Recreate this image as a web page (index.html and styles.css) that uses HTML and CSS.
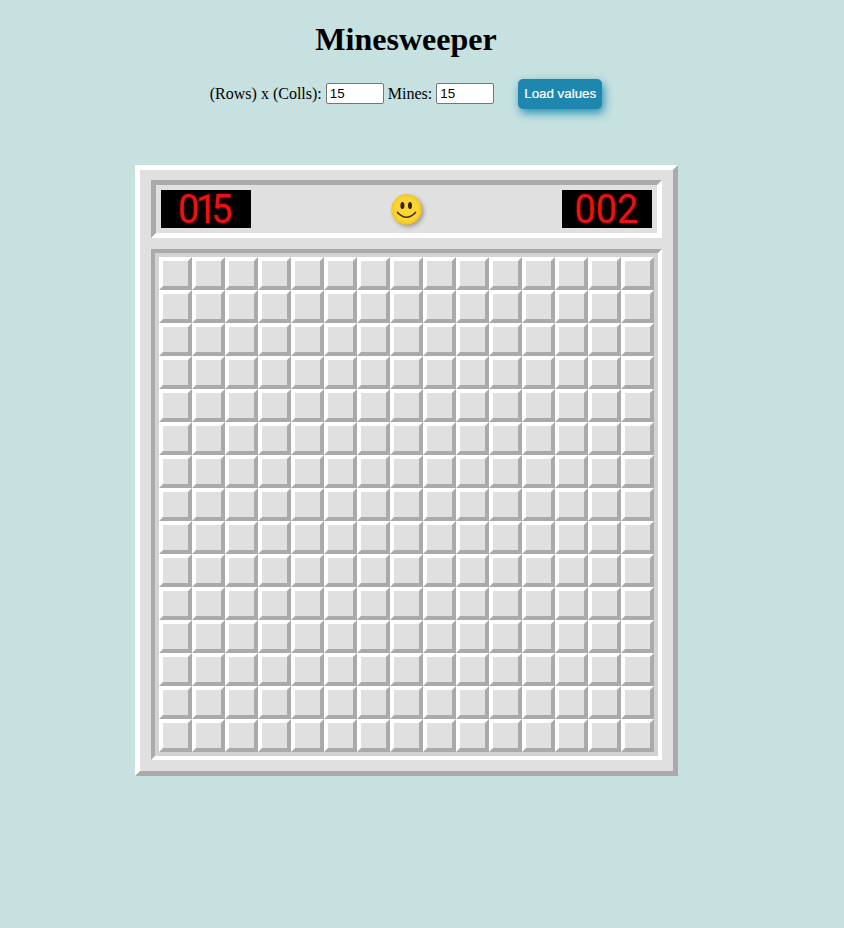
FILE: index.html
```html
<!DOCTYPE html>
<html lang="en">
<head>
<meta charset="utf-8">
<title>Minesweeper</title>
<link rel="stylesheet" href="styles.css">
</head>
<body>
<main class="page">
  <h1 class="title">Minesweeper</h1>
  <form class="settings">
    <label for="size">(Rows) x (Colls):</label>
    <input id="size" class="field" type="text" value="15">
    <label for="mines">Mines:</label>
    <input id="mines" class="field" type="text" value="15">
    <button class="load" type="button">Load values</button>
  </form>
  <section class="game">
    <header class="panel">
      <div class="counter"><span class="digits"><span>0</span><span class="one">1</span><span>5</span></span></div>
      <svg class="face" viewBox="0 0 31 31" aria-label="New game">
        <defs><radialGradient id="skin"><stop offset="0.75" stop-color="#fcd535"/><stop offset="1" stop-color="#efc522"/></radialGradient></defs>
        <circle cx="15.5" cy="15.5" r="15.2" fill="url(#skin)"/>
        <ellipse cx="11.4" cy="11.6" rx="2" ry="3.5" fill="#2b2505"/>
        <ellipse cx="19" cy="11.6" rx="2" ry="3.5" fill="#2b2505"/>
        <path d="M6.5 18.5Q15.5 28 24.5 18.5" fill="none" stroke="#3d3106" stroke-width="1.7" stroke-linecap="round"/>
      </svg>
      <div class="counter"><span class="digits"><span>0</span><span>0</span><span>2</span></span></div>
    </header>
    <div class="board" id="board"></div>
  </section>
</main>
<script src="board.js"></script>
</body>
</html>
```
FILE: styles.css
```css
body {
  margin: 0;
  min-height: 928px;
  background: #c6e1e0;
  color: #000;
  font: 16px "Liberation Serif", serif;
}
.page {
  display: flex;
  flex-direction: column;
  align-items: center;
  width: 812px;
}
.title {
  margin: 21px 0 0;
  font-size: 32px;
  line-height: 37px;
}
.settings {
  display: flex;
  align-items: center;
  gap: 4px;
  height: 30px;
  margin-top: 21px;
}
.field {
  box-sizing: border-box;
  width: 58px;
  height: 21px;
  margin: 0 0 2px;
  padding: 1px 3px;
  border: 1px solid #767676;
  border-radius: 2px;
  background: #fff;
  font: 13.333px "Liberation Sans", sans-serif;
}
.load {
  width: 84px;
  height: 30px;
  margin-left: 20px;
  padding: 0 0 2px;
  border: 0;
  border-radius: 5px;
  background: #1f87ae;
  box-shadow: 2px 4px 10px #2690b6;
  color: #fff;
  font: 13.333px "Liberation Sans", sans-serif;
  -webkit-text-stroke: 0.2px #fff;
}
.game {
  display: flex;
  flex-direction: column;
  gap: 11px;
  margin-top: 56px;
  padding: 10px 11px 11px;
  border: 5px solid;
  border-color: #fff #aaa #aaa #fff;
  background: #e0e0e0;
}
.panel {
  display: flex;
  align-items: center;
  justify-content: space-between;
  height: 38px;
  padding: 5px;
  border: 5px solid;
  border-color: #aaa #fff #fff #aaa;
}
.counter {
  display: flex;
  align-items: center;
  justify-content: center;
  width: 90px;
  height: 38px;
  background: #000;
}
.digits {
  display: flex;
  color: #e81414;
  font: 41px/38px Roboto, sans-serif;
  text-shadow: 0 0 3px #900;
  transform: scaleX(0.92);
}
.one {
  margin: 0 -6px 0 -4px;
}
.face {
  width: 31px;
  height: 31px;
  filter: drop-shadow(2px 2px 2px #999);
}
.board {
  display: grid;
  grid-template-columns: repeat(15, 33px);
  grid-auto-rows: 33px;
  padding: 4px;
  border: 4px solid;
  border-color: #aaa #fff #fff #aaa;
  background: #d3d3d3;
}
.cell {
  border: 4px solid;
  border-color: #fff #aaa #aaa #fff;
  background: #e0e0e0;
}
```
FILE: board.js
```js
const board = document.getElementById("board");
for (let i = 0; i < 15 * 15; i++) {
  const cell = document.createElement("div");
  cell.className = "cell";
  board.appendChild(cell);
}
```
